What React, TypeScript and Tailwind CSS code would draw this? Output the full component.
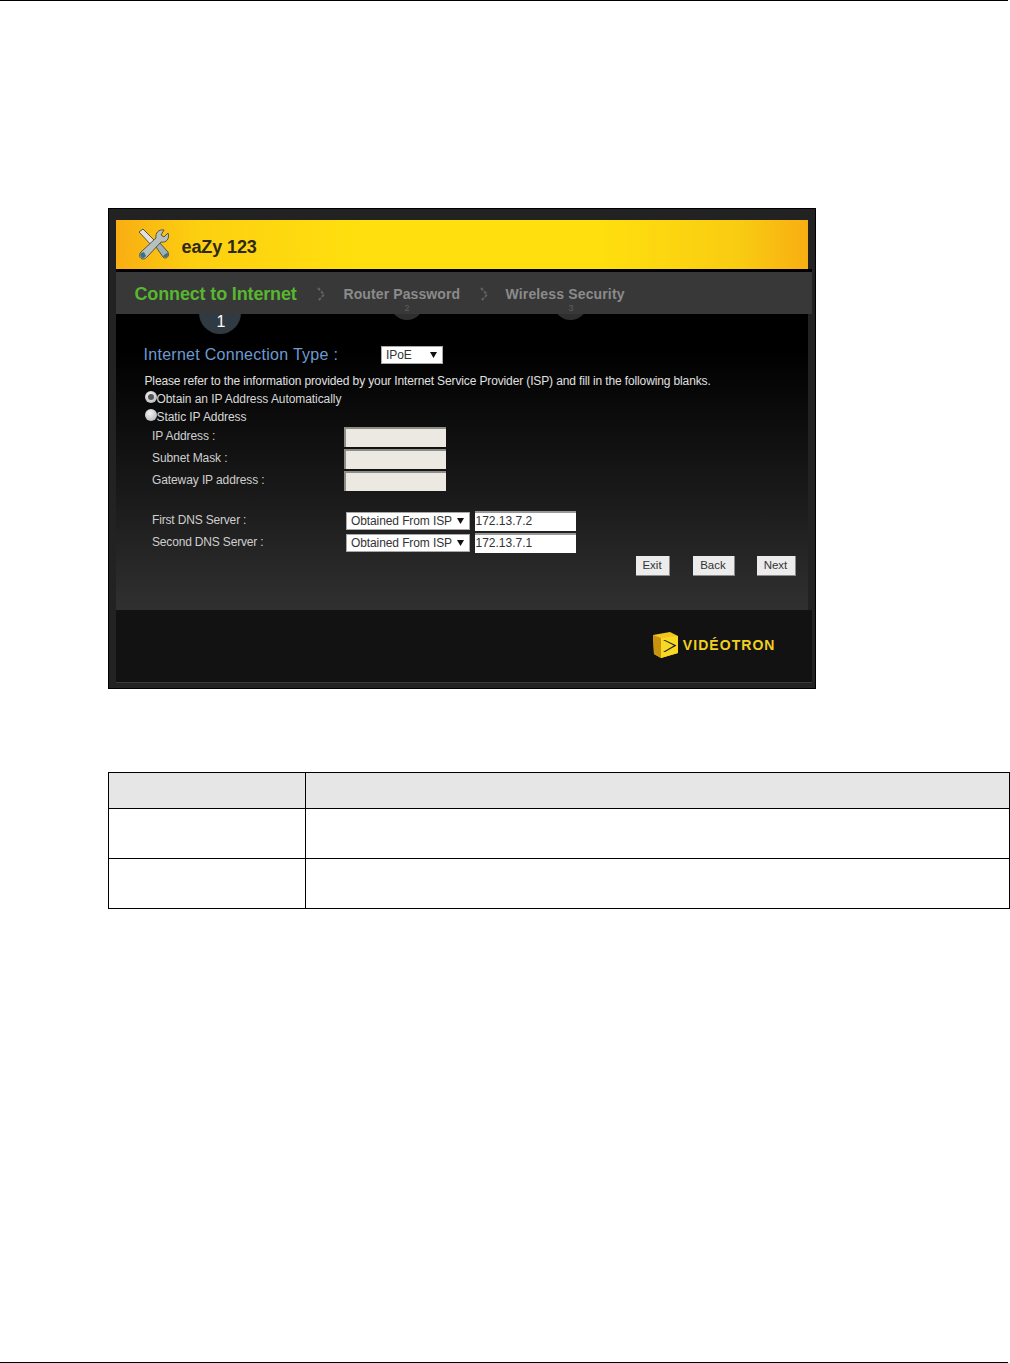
const sans = "font-['Liberation_Sans',Arial,sans-serif]";

function ToolsIcon() {
  return (
    <svg width="32" height="32" viewBox="0 0 32 32" aria-hidden>
      {/* screwdriver shaft, then the wrench across it */}
      <path d="M1 4 L5 1 L19 15 L15 19 Z" fill="#dfe2dc" stroke="#57533f" strokeWidth="1" />
      <path d="M16 16 L20 13 L30 24 C32 28 28 32 25 29 Z" fill="#9db0b4" stroke="#57533f" strokeWidth="1" />
      <path
        d="M30 5 L26 9 L23 7 L26 2 C21 1 17 5 18 10 L3 24 C0 27 2 31 5 31 C7 31 8 30 9 29 L23 14 C28 15 32 11 30 5 Z"
        fill="#b6c1bf"
        stroke="#57533f"
        strokeWidth="1"
      />
      <path d="M3 25 C1 27 3 30 5 30 C6 30 7 29 8 28 L6 24 Z" fill="#3c6f82" />
      <path d="M25 28 L29.5 24.5 C31 28 28 31 25 28 Z" fill="#3c6f82" />
    </svg>
  );
}

function StepChevron() {
  return (
    <svg width="10" height="15" viewBox="0 0 10 15" aria-hidden>
      <path d="M2 1 L8 7.5 L2 14" fill="none" stroke="#626262" strokeWidth="2" strokeDasharray="3 1.5" />
    </svg>
  );
}

function VideotronLogo() {
  return (
    <svg width="25" height="26" viewBox="0 0 25 26" aria-hidden>
      <path d="M0 3 L17 0 L25 4 L25 21 L8 26 L1 22 Z" fill="#f4c51c" />
      <path d="M0 3 L8 6 L8 26 L1 22 Z" fill="#c9930f" />
      <path d="M8 6 L25 4 L25 21 L8 26 Z" fill="#f7d925" />
      <path d="M10 8 L21 13.5 L10 20 L12 20 L23.5 13.5 L12 8 Z" fill="#1c1c14" />
    </svg>
  );
}

function FakeSelect({ label, className }: { label: string; className: string }) {
  return (
    <div className={`flex h-[18px] items-center justify-between border border-[#a8a8a8] bg-white pl-[4.5px] pr-[5px] text-[12px] tracking-[-0.1px] text-[#333] ${className}`}>
      <span className="whitespace-nowrap">{label}</span>
      <svg width="7" height="7" viewBox="0 0 7 7" aria-hidden>
        <path d="M0 1 H7 L3.5 7 Z" fill="#111" />
      </svg>
    </div>
  );
}

function Radio({ checked, label }: { checked?: boolean; label: string }) {
  return (
    <div className="flex h-[18px] pl-[1px]">
      <span className="mt-[1px] flex h-[12px] w-[12px] items-center justify-center rounded-full bg-[radial-gradient(circle_at_40%_35%,#f4f4f4,#a9a9a9)]">
        {checked && <span className="h-[6px] w-[6px] rounded-full bg-[#555]" />}
      </span>
      <span className="mt-[1px] text-[12px] leading-[16px] tracking-[-0.07px] text-[#d8d8d8]">{label}</span>
    </div>
  );
}

const ipRows = ['IP Address :', 'Subnet Mask :', 'Gateway IP address :'];
const dnsRows = [
  { label: 'First DNS Server :', value: '172.13.7.2' },
  { label: 'Second DNS Server :', value: '172.13.7.1' },
];
const buttons = [
  { label: 'Exit', width: 'mr-[1px] w-[34px]' },
  { label: 'Back', width: 'w-[42px]' },
  { label: 'Next', width: 'w-[39px]' },
];

function Wizard() {
  return (
    <div className="relative ml-[108px] mt-[207px] h-[481px] w-[708px] border-[1.5px] border-black bg-[#222] pb-[5px] pl-[6.5px] pr-[3.5px] pt-[10.5px]">
      <div className="mr-[4px] flex h-[49px] items-center bg-[linear-gradient(90deg,#f8ae12_0%,#fdd010_12%,#ffdf0e_35%,#ffdf0e_70%,#f9cc12_90%,#f8ae12_100%)] pl-[22px]">
        <ToolsIcon />
        <span className="ml-[12px] mt-[7px] text-[18px] font-bold tracking-[-0.1px] text-[#2c2a16]">eaZy 123</span>
      </div>
      <div className="h-[3px] bg-black" />

      <div className="relative">
        {/* step discs hang below the bar, over the form background */}
        <div className="absolute left-[83px] top-[20px] z-10 h-[42px] w-[42px] rounded-full bg-[#2f3a42]" />
        <div className="absolute left-[274px] top-[6px] z-10 h-[42px] w-[34px] rounded-full bg-[#2f2f2f]" />
        <div className="absolute left-[437px] top-[6px] z-10 h-[42px] w-[35px] rounded-full bg-[#2f2f2f]" />

        <div className="relative z-20 flex h-[42px] items-center bg-[#383838] pl-[19px] pt-[3px]">
          <span className="w-[162px] whitespace-nowrap text-[18px] font-bold tracking-[-0.15px] text-[#58b62f]">Connect to Internet</span>
          <span className="ml-[19px] flex"><StepChevron /></span>
          <span className="ml-[18px] w-[117px] whitespace-nowrap text-[14px] font-bold tracking-[0.1px] text-[#8b8b8b]">Router Password</span>
          <span className="ml-[18px] flex"><StepChevron /></span>
          <span className="ml-[17px] whitespace-nowrap text-[14px] font-bold tracking-[0.15px] text-[#8b8b8b]">Wireless Security</span>
        </div>
        <span className="absolute left-[101px] top-[41px] z-30 text-[16px] leading-[18px] text-white">1</span>
        <span className="absolute left-[289px] top-[31px] z-30 text-[9px] leading-[10px] text-[#5e5e5e]">2</span>
        <span className="absolute left-[453px] top-[31px] z-30 text-[9px] leading-[10px] text-[#5e5e5e]">3</span>

        <div className="mr-[4px] flex h-[296px] flex-col bg-[linear-gradient(180deg,#000_12%,#1a1a1a_62%,#303030_100%)] pl-[28px] pt-[32px]">
          <div className="flex h-[18px] items-center">
            <span className="w-[237px] text-[16px] tracking-[0.28px] text-[#6d9ad2]">Internet Connection Type :</span>
            <FakeSelect label="IPoE" className="w-[62px]" />
          </div>
          <p className="mt-[8px] h-[18px] whitespace-nowrap pl-[1px] text-[12px] leading-[18px] tracking-[-0.13px] text-[#e0e0e0]">
            Please refer to the information provided by your Internet Service Provider (ISP) and fill in the following blanks.
          </p>
          <Radio checked label="Obtain an IP Address Automatically" />
          <Radio label="Static IP Address" />

          <div className="mt-[1px] flex flex-col gap-[2px]">
            {ipRows.map((label) => (
              <div key={label} className="flex h-[20px] items-start">
                <span className="w-[200px] pl-[8.5px] text-[12px] leading-[18px] tracking-[-0.1px] text-[#cfcfcf]">{label}</span>
                <div className="h-[20px] w-[102px] border-l-2 border-t-2 border-[#8e8e88] bg-[#ebe9e1]" />
              </div>
            ))}
          </div>

          <div className="mt-[20px] flex flex-col gap-[2px]">
            {dnsRows.map((row) => (
              <div key={row.label} className="flex h-[20px] items-start">
                <span className="w-[202px] pl-[8.5px] text-[12px] leading-[18px] tracking-[-0.17px] text-[#cfcfcf]">{row.label}</span>
                <FakeSelect label="Obtained From ISP" className="mt-[1px] w-[124px]" />
                <div className="ml-[5px] flex h-[20px] w-[101px] items-center border-t-2 border-[#999] bg-white pb-[2px] pl-[1px] text-[12px] text-[#333]">
                  {row.value}
                </div>
              </div>
            ))}
          </div>

          <div className="mt-[3px] flex justify-end gap-[22px] pr-[12px]">
            {buttons.map((b) => (
              <div key={b.label} className={`flex h-[20px] items-center justify-center border-b border-r border-[#8a8a8a] bg-[#ececec] pt-[1px] text-[11.5px] text-[#333] ${b.width}`}>
                {b.label}
              </div>
            ))}
          </div>
        </div>

        <div className="flex h-[73px] items-center justify-end gap-[5px] border-b border-[#3a3a3a] bg-[#121212] pb-[2px] pr-[36px]">
          <VideotronLogo />
          <span className="mt-[1px] text-[14px] font-bold tracking-[1.05px] text-[#efd01e]">VIDÉOTRON</span>
        </div>
      </div>
    </div>
  );
}

export default function App() {
  return (
    <div className={`flex h-[1363px] w-[1010px] flex-col overflow-hidden bg-white ${sans}`}>
      <div className="h-[1px] w-[1008px] bg-black" />
      <Wizard />
      <table className="ml-[108px] mt-[83px] w-[902px] table-fixed border-collapse">
        <colgroup>
          <col className="w-[197px]" />
          <col />
        </colgroup>
        <tbody>
          <tr className="h-[36px] bg-[#e6e6e6]">
            <td className="border border-black" />
            <td className="border border-black" />
          </tr>
          <tr className="h-[50px]">
            <td className="border border-black" />
            <td className="border border-black" />
          </tr>
          <tr className="h-[50px]">
            <td className="border border-black" />
            <td className="border border-black" />
          </tr>
        </tbody>
      </table>
      <div className="mt-auto h-[1px] w-[1008px] bg-black" />
    </div>
  );
}
